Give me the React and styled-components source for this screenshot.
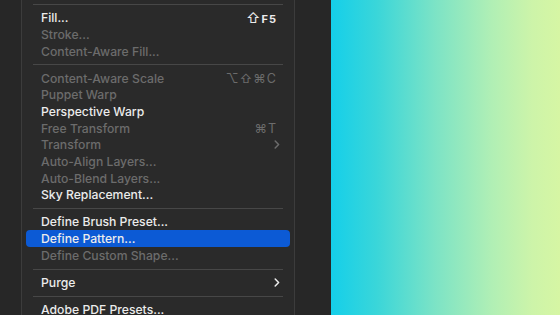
import styled, { createGlobalStyle } from "styled-components";

const GlobalStyle = createGlobalStyle`
  html, body {
    margin: 0;
    padding: 0;
    background: #272727;
    overflow: hidden;
  }
`;

const Screen = styled.div`
  display: flex;
  width: 560px;
  height: 315px;
  background: #272727;
  font-family: Inter, "DejaVu Sans", sans-serif;
  font-size: 12.2px;
`;

const Gutter = styled.div`
  width: ${(p) => p.$width}px;
  flex-shrink: 0;
  background: #272727;
`;

const Menu = styled.div`
  width: 264px;
  flex-shrink: 0;
  background: #2a2a2a;
  border-left: 1px solid #3c3c3c;
  border-right: 1px solid #3c3c3c;
  padding: 0 4px;
  margin-top: -1px;
`;

const Separator = styled.div`
  height: 1px;
  background: #474747;
  margin: 5px 7px 4.3px;
`;

const Row = styled.div`
  display: flex;
  align-items: center;
  height: 16.7px;
  padding: 0 13px 0 15px;
  border-radius: 4px;
  background: ${(p) => (p.$active ? "#0c5ad5" : "transparent")};
  color: ${(p) => (p.$disabled ? "#6c6c6c" : "#ececec")};
  font-weight: 500;
  white-space: nowrap;
`;

const Label = styled.span`
  flex: 1;
`;

const Shortcut = styled.span`
  color: ${(p) => (p.$disabled ? "#6c6c6c" : "#ececec")};
  font-size: ${(p) => (p.$small ? 11 : 12.5)}px;
  font-weight: ${(p) => (p.$small ? 700 : 400)};
  letter-spacing: 1px;
`;

const ShiftGlyph = styled.span`
  font-size: 14px;
  font-weight: 400;
`;

const ChevronBox = styled.svg`
  margin-right: -3px;
`;

const Canvas = styled.div`
  flex: 1;
  background: linear-gradient(
    to right,
    #14cfea 0%,
    #3ad6d9 20%,
    #7be3c6 45%,
    #b0efb5 70%,
    #cdf4a9 88%,
    #d6f6a4 100%
  );
`;

function Chevron({ dim }) {
  return (
    <ChevronBox width="6" height="9" viewBox="0 0 6 9">
      <path
        d="M1.2 1 L4.6 4.5 L1.2 8"
        fill="none"
        stroke={dim ? "#6c6c6c" : "#ececec"}
        strokeWidth="1.5"
        strokeLinecap="round"
        strokeLinejoin="round"
      />
    </ChevronBox>
  );
}

const sections = [
  [
    { label: "Fill...", shortcut: "F5", shift: true },
    { label: "Stroke...", disabled: true },
    { label: "Content-Aware Fill...", disabled: true },
  ],
  [
    { label: "Content-Aware Scale", disabled: true, shortcut: "⌥⇧⌘C" },
    { label: "Puppet Warp", disabled: true },
    { label: "Perspective Warp" },
    { label: "Free Transform", disabled: true, shortcut: "⌘T" },
    { label: "Transform", disabled: true, submenu: true },
    { label: "Auto-Align Layers...", disabled: true },
    { label: "Auto-Blend Layers...", disabled: true },
    { label: "Sky Replacement..." },
  ],
  [
    { label: "Define Brush Preset..." },
    { label: "Define Pattern...", active: true },
    { label: "Define Custom Shape...", disabled: true },
  ],
  [{ label: "Purge", submenu: true }],
  [{ label: "Adobe PDF Presets..." }],
];

function MenuItem({ item }) {
  return (
    <Row $disabled={item.disabled} $active={item.active}>
      <Label>{item.label}</Label>
      {item.shortcut && (
        <Shortcut $disabled={item.disabled} $small={item.shift}>
          {item.shift && <ShiftGlyph>⇧</ShiftGlyph>}
          {item.shortcut}
        </Shortcut>
      )}
      {item.submenu && <Chevron dim={item.disabled} />}
    </Row>
  );
}

export default function App() {
  return (
    <Screen>
      <GlobalStyle />
      <Gutter $width={21} />
      <Menu>
        {sections.map((section, i) => (
          <div key={i}>
            <Separator />
            {section.map((item) => (
              <MenuItem key={item.label} item={item} />
            ))}
          </div>
        ))}
      </Menu>
      <Gutter $width={36} />
      <Canvas />
    </Screen>
  );
}
